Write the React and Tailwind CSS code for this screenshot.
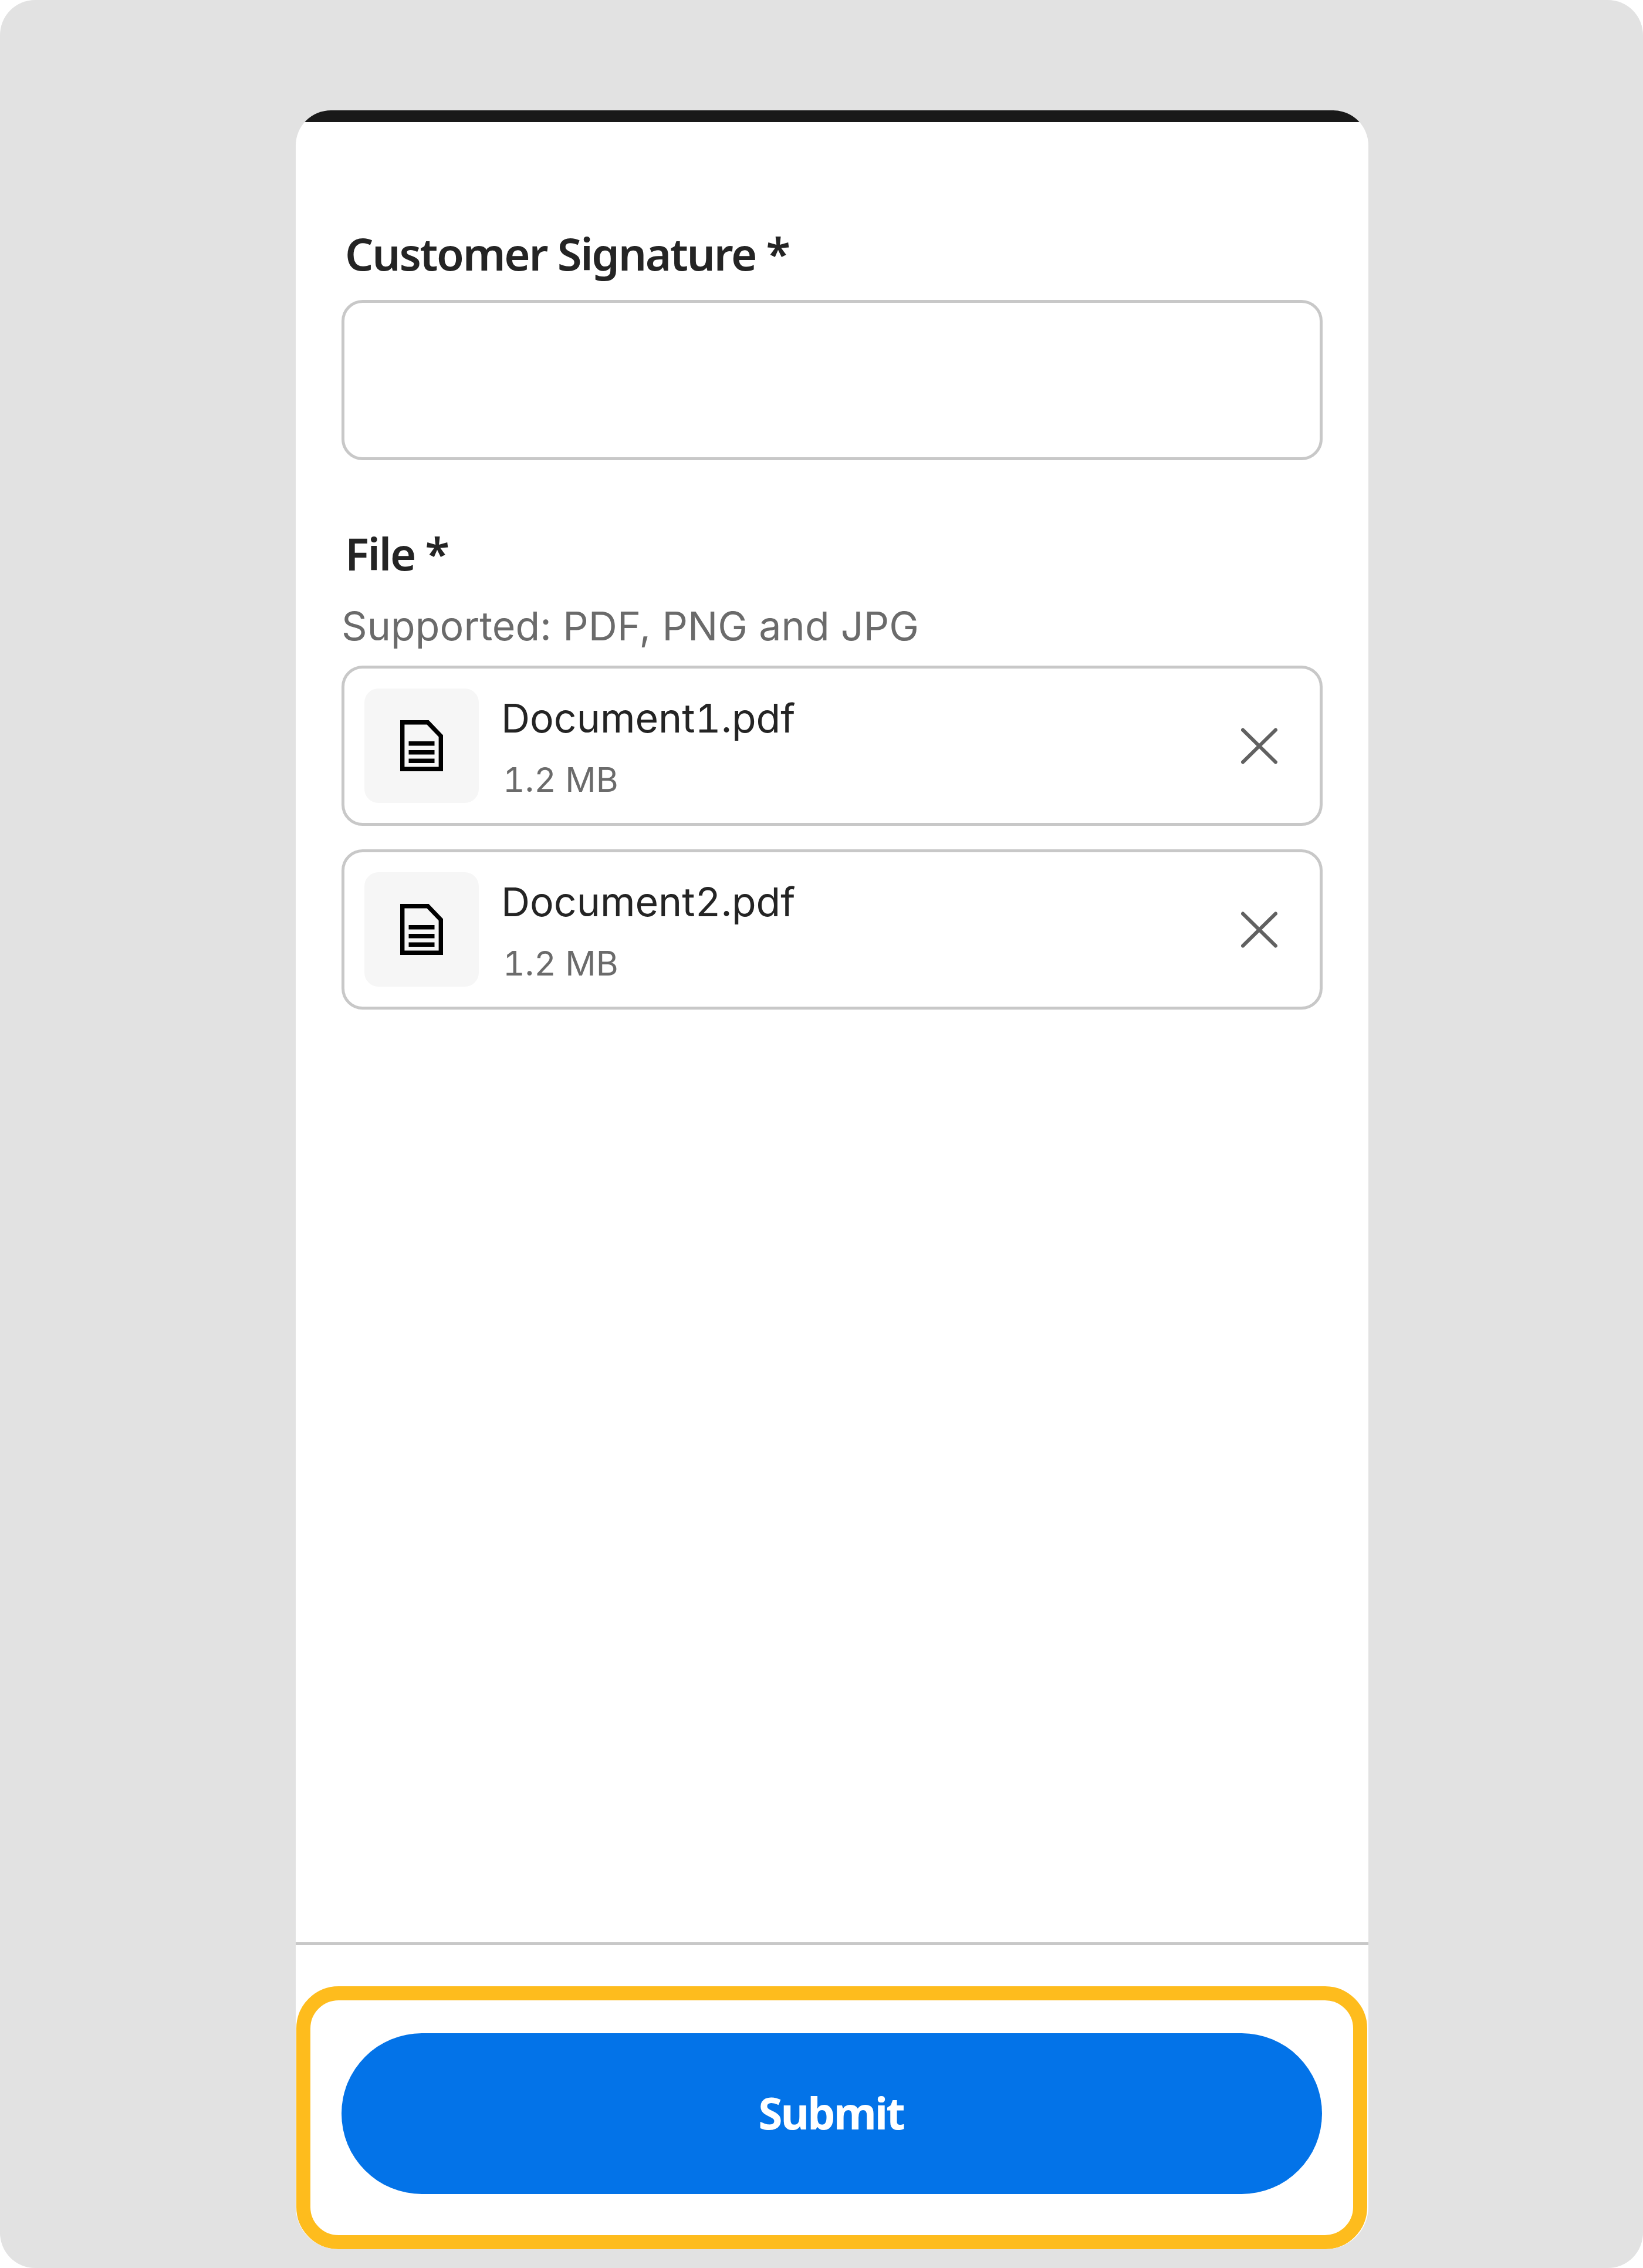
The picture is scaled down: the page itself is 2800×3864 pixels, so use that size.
const inter = "font-['Inter',sans-serif]";
const label = "font-['Noto_Sans',sans-serif] font-semibold text-[#242424] text-[76px] leading-[98px] tracking-[-2.3px]";

function DocIcon() {
  return (
    <svg width="73" height="87" viewBox="0 0 73 87" fill="none" className="block">
      <path d="M3.7 3.7H47L69.3 27V83.3H3.7Z" stroke="#000" strokeWidth="7.4" strokeLinejoin="miter" />
      <rect x="14.5" y="36" width="44" height="7.5" fill="#000" />
      <rect x="14.5" y="51" width="44" height="7.5" fill="#000" />
      <rect x="14.5" y="65.5" width="44" height="7.5" fill="#000" />
    </svg>
  );
}

function CloseIcon() {
  return (
    <svg width="62" height="62" viewBox="0 0 62 62" fill="none" className="block">
      <path d="M3 3.5L59 58.5M59 3.5L3 58.5" stroke="#616161" strokeWidth="6" strokeLinecap="round" />
    </svg>
  );
}

function FileRow({ name }) {
  return (
    <div className="flex items-center h-[273px] rounded-[36px] border-[5px] border-[#c8c8c8] pl-[34px] pr-[72px]">
      <div className="flex items-center justify-center w-[195px] h-[195px] rounded-[24px] bg-[#f6f6f6] shrink-0">
        <DocIcon />
      </div>
      <div className="flex-1 ml-[38px] flex flex-col">
        <div className={`${inter} text-[68px] leading-[80px] text-[#242424] mt-[4px] tabular-nums`}>{name}</div>
        <div className={`${inter} text-[58px] leading-[70px] text-[#6b6b6b] mt-[30px] ml-[3px] tabular-nums`}>1.2 MB</div>
      </div>
      <CloseIcon />
    </div>
  );
}

export default function App() {
  return (
    <div className="w-[2800px] h-[3864px] bg-[#e2e2e2] rounded-[60px] pt-[188px] pl-[504px]">
      <div className="w-[1828px] h-[3644px] bg-white rounded-t-[60px] rounded-b-[72px] overflow-hidden flex flex-col">
        <div className="h-[20px] bg-[#191919] shrink-0" />
        <div className="flex-1 px-[78px] flex flex-col">
          <div className={`${label} mt-[175px] ml-[6px]`}>Customer Signature *</div>
          <div className="h-[273px] rounded-[36px] border-[5px] border-[#c8c8c8] mt-[30px]" />
          <div className={`${label} mt-[110px] ml-[6px]`}>File *</div>
          <div className={`${inter} text-[68px] leading-[84px] tracking-[0.1px] text-[#6b6b6b] mt-[32px]`}>Supported: PDF, PNG and JPG</div>
          <div className="flex flex-col gap-[40px] mt-[26px]">
            <FileRow name="Document1.pdf" />
            <FileRow name="Document2.pdf" />
          </div>
        </div>
        <div className="h-[5px] bg-[#c8c8c8] shrink-0" />
        <div className="mt-[70px] ml-[1px] mr-[2px] h-[448px] shrink-0 rounded-[72px] border-[24px] border-[#febc1d] pl-[53px] pr-[53px] pt-[56px]">
          <button className="w-full h-[274px] rounded-full bg-[#0373e8] text-white font-['Noto_Sans',sans-serif] font-bold text-[75px] tracking-[-3px] pb-[4px] pr-[3px] flex items-center justify-center">
            Submit
          </button>
        </div>
      </div>
    </div>
  );
}
